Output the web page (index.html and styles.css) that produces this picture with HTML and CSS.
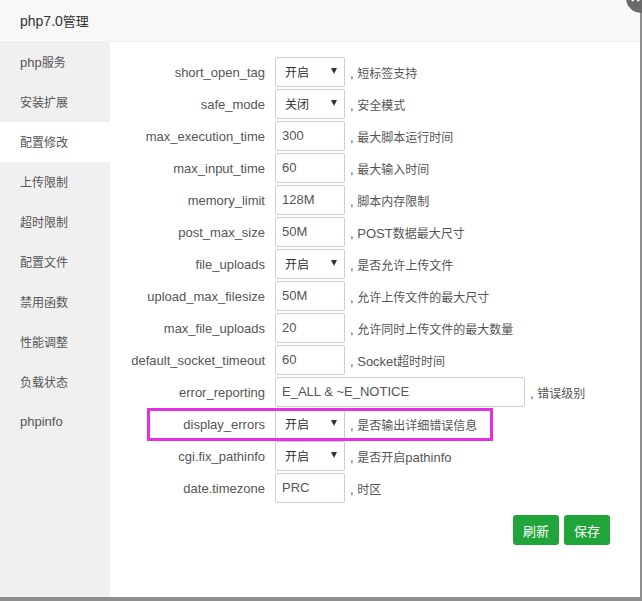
FILE: index.html
```html
<!DOCTYPE html>
<html lang="zh">
<head>
<meta charset="utf-8">
<title>php7.0管理</title>
<link rel="stylesheet" href="styles.css">
</head>
<body>
<div class="dialog">
  <div class="close"><svg width="30" height="30" viewBox="0 0 30 30"><path d="M6 11 L13 18 M13 11 L6 18" stroke="#fff" stroke-width="2" fill="none"/></svg></div>
  <div class="title">php7.0<span class="zh">管理</span></div>
  <div class="main">
    <ul class="side">
      <li>php<span class="zh">服务</span></li>
      <li><span class="zh">安装扩展</span></li>
      <li class="on"><span class="zh">配置修改</span></li>
      <li><span class="zh">上传限制</span></li>
      <li><span class="zh">超时限制</span></li>
      <li><span class="zh">配置文件</span></li>
      <li><span class="zh">禁用函数</span></li>
      <li><span class="zh">性能调整</span></li>
      <li><span class="zh">负载状态</span></li>
      <li>phpinfo</li>
    </ul>
    <div class="content">
      <div class="form">
        <div class="row"><span class="label">short_open_tag</span><div class="sel"><span class="zh">开启</span><span class="arr"></span></div><span class="tip">, <span class="zh">短标签支持</span></span></div>
        <div class="row"><span class="label">safe_mode</span><div class="sel"><span class="zh">关闭</span><span class="arr"></span></div><span class="tip">, <span class="zh">安全模式</span></span></div>
        <div class="row"><span class="label">max_execution_time</span><div class="inp">300</div><span class="tip">, <span class="zh">最大脚本运行时间</span></span></div>
        <div class="row"><span class="label">max_input_time</span><div class="inp">60</div><span class="tip">, <span class="zh">最大输入时间</span></span></div>
        <div class="row"><span class="label">memory_limit</span><div class="inp">128M</div><span class="tip">, <span class="zh">脚本内存限制</span></span></div>
        <div class="row"><span class="label">post_max_size</span><div class="inp">50M</div><span class="tip">, POST<span class="zh">数据最大尺寸</span></span></div>
        <div class="row"><span class="label">file_uploads</span><div class="sel"><span class="zh">开启</span><span class="arr"></span></div><span class="tip">, <span class="zh">是否允许上传文件</span></span></div>
        <div class="row"><span class="label">upload_max_filesize</span><div class="inp">50M</div><span class="tip">, <span class="zh">允许上传文件的最大尺寸</span></span></div>
        <div class="row"><span class="label">max_file_uploads</span><div class="inp">20</div><span class="tip">, <span class="zh">允许同时上传文件的最大数量</span></span></div>
        <div class="row"><span class="label">default_socket_timeout</span><div class="inp">60</div><span class="tip">, Socket<span class="zh">超时时间</span></span></div>
        <div class="row"><span class="label">error_reporting</span><div class="inp wide">E_ALL &amp; ~E_NOTICE</div><span class="tip">, <span class="zh">错误级别</span></span></div>
        <div class="row"><span class="label">display_errors</span><div class="sel"><span class="zh">开启</span><span class="arr"></span></div><span class="tip">, <span class="zh">是否输出详细错误信息</span></span></div>
        <div class="row"><span class="label">cgi.fix_pathinfo</span><div class="sel"><span class="zh">开启</span><span class="arr"></span></div><span class="tip">, <span class="zh">是否开启</span>pathinfo</span></div>
        <div class="row"><span class="label">date.timezone</span><div class="inp">PRC</div><span class="tip">, <span class="zh">时区</span></span></div>
        <div class="mark"></div>
      </div>
      <div class="btns"><button class="btn">刷新</button><button class="btn">保存</button></div>
    </div>
  </div>
</div>
</body>
</html>
```

FILE: styles.css
```css
html, body {
  margin: 0;
  padding: 0;
}
body {
  width: 642px;
  height: 601px;
  background: #8e8e8e;
  overflow: hidden;
  font-family: "Liberation Sans", "Noto Sans CJK SC", sans-serif;
  font-size: 13px;
  color: #555;
}
.zh {
  font-family: "Noto Sans CJK SC", sans-serif;
  font-size: 12px;
}
.dialog {
  position: relative;
  width: 640px;
  height: 597px;
  background: #fff;
  display: flex;
  flex-direction: column;
}
.close {
  position: absolute;
  left: 626px;
  top: -17px;
  width: 30px;
  height: 30px;
  border-radius: 50%;
  background: #6b6b6b;
}
.close svg {
  display: block;
}
.title {
  height: 41px;
  line-height: 41px;
  padding-left: 20px;
  background: #f8f8f8;
  border-bottom: 1px solid #eee;
  font-size: 14px;
  color: #333;
}
.title .zh {
  font-size: 13px;
}
.main {
  flex: 1;
  display: flex;
}
.side {
  list-style: none;
  margin: 0;
  padding: 0;
  width: 110px;
  background: #f0f0f0;
}
.side li {
  height: 40px;
  line-height: 40px;
  padding-left: 20px;
  color: #555;
}
.side li.on {
  background: #fff;
}
.content {
  flex: 1;
  padding: 14px 30px 0 0;
}
.form {
  position: relative;
}
.row {
  display: flex;
  align-items: center;
  height: 32px;
}
.label {
  width: 155px;
  margin-right: 10px;
  text-align: right;
  color: #555;
}
.inp, .sel {
  box-sizing: border-box;
  width: 70px;
  height: 30px;
  border: 1px solid #ccc;
  border-radius: 2px;
  line-height: 28px;
  color: #555;
}
.inp {
  padding-left: 6px;
}
.inp.wide {
  width: 250px;
}
.sel {
  display: flex;
  align-items: center;
  justify-content: space-between;
  padding: 0 7px 0 9px;
  color: #333;
}
.arr {
  width: 0;
  height: 0;
  border-left: 3px solid transparent;
  border-right: 3px solid transparent;
  border-top: 6px solid #333;
  margin-top: -2px;
}
.tip {
  margin-left: 5px;
}
.mark {
  position: absolute;
  left: 37px;
  top: 352px;
  width: 340px;
  height: 27px;
  border: 3px solid #e62ee6;
}
.btns {
  display: flex;
  justify-content: flex-end;
  gap: 5px;
  margin-top: 11px;
}
.btn {
  width: 46px;
  height: 30px;
  border: 0;
  border-radius: 3px;
  background: #20a53a;
  color: #fff;
  font-family: "Noto Sans CJK SC", sans-serif;
  font-size: 13px;
  padding: 0;
}
```
